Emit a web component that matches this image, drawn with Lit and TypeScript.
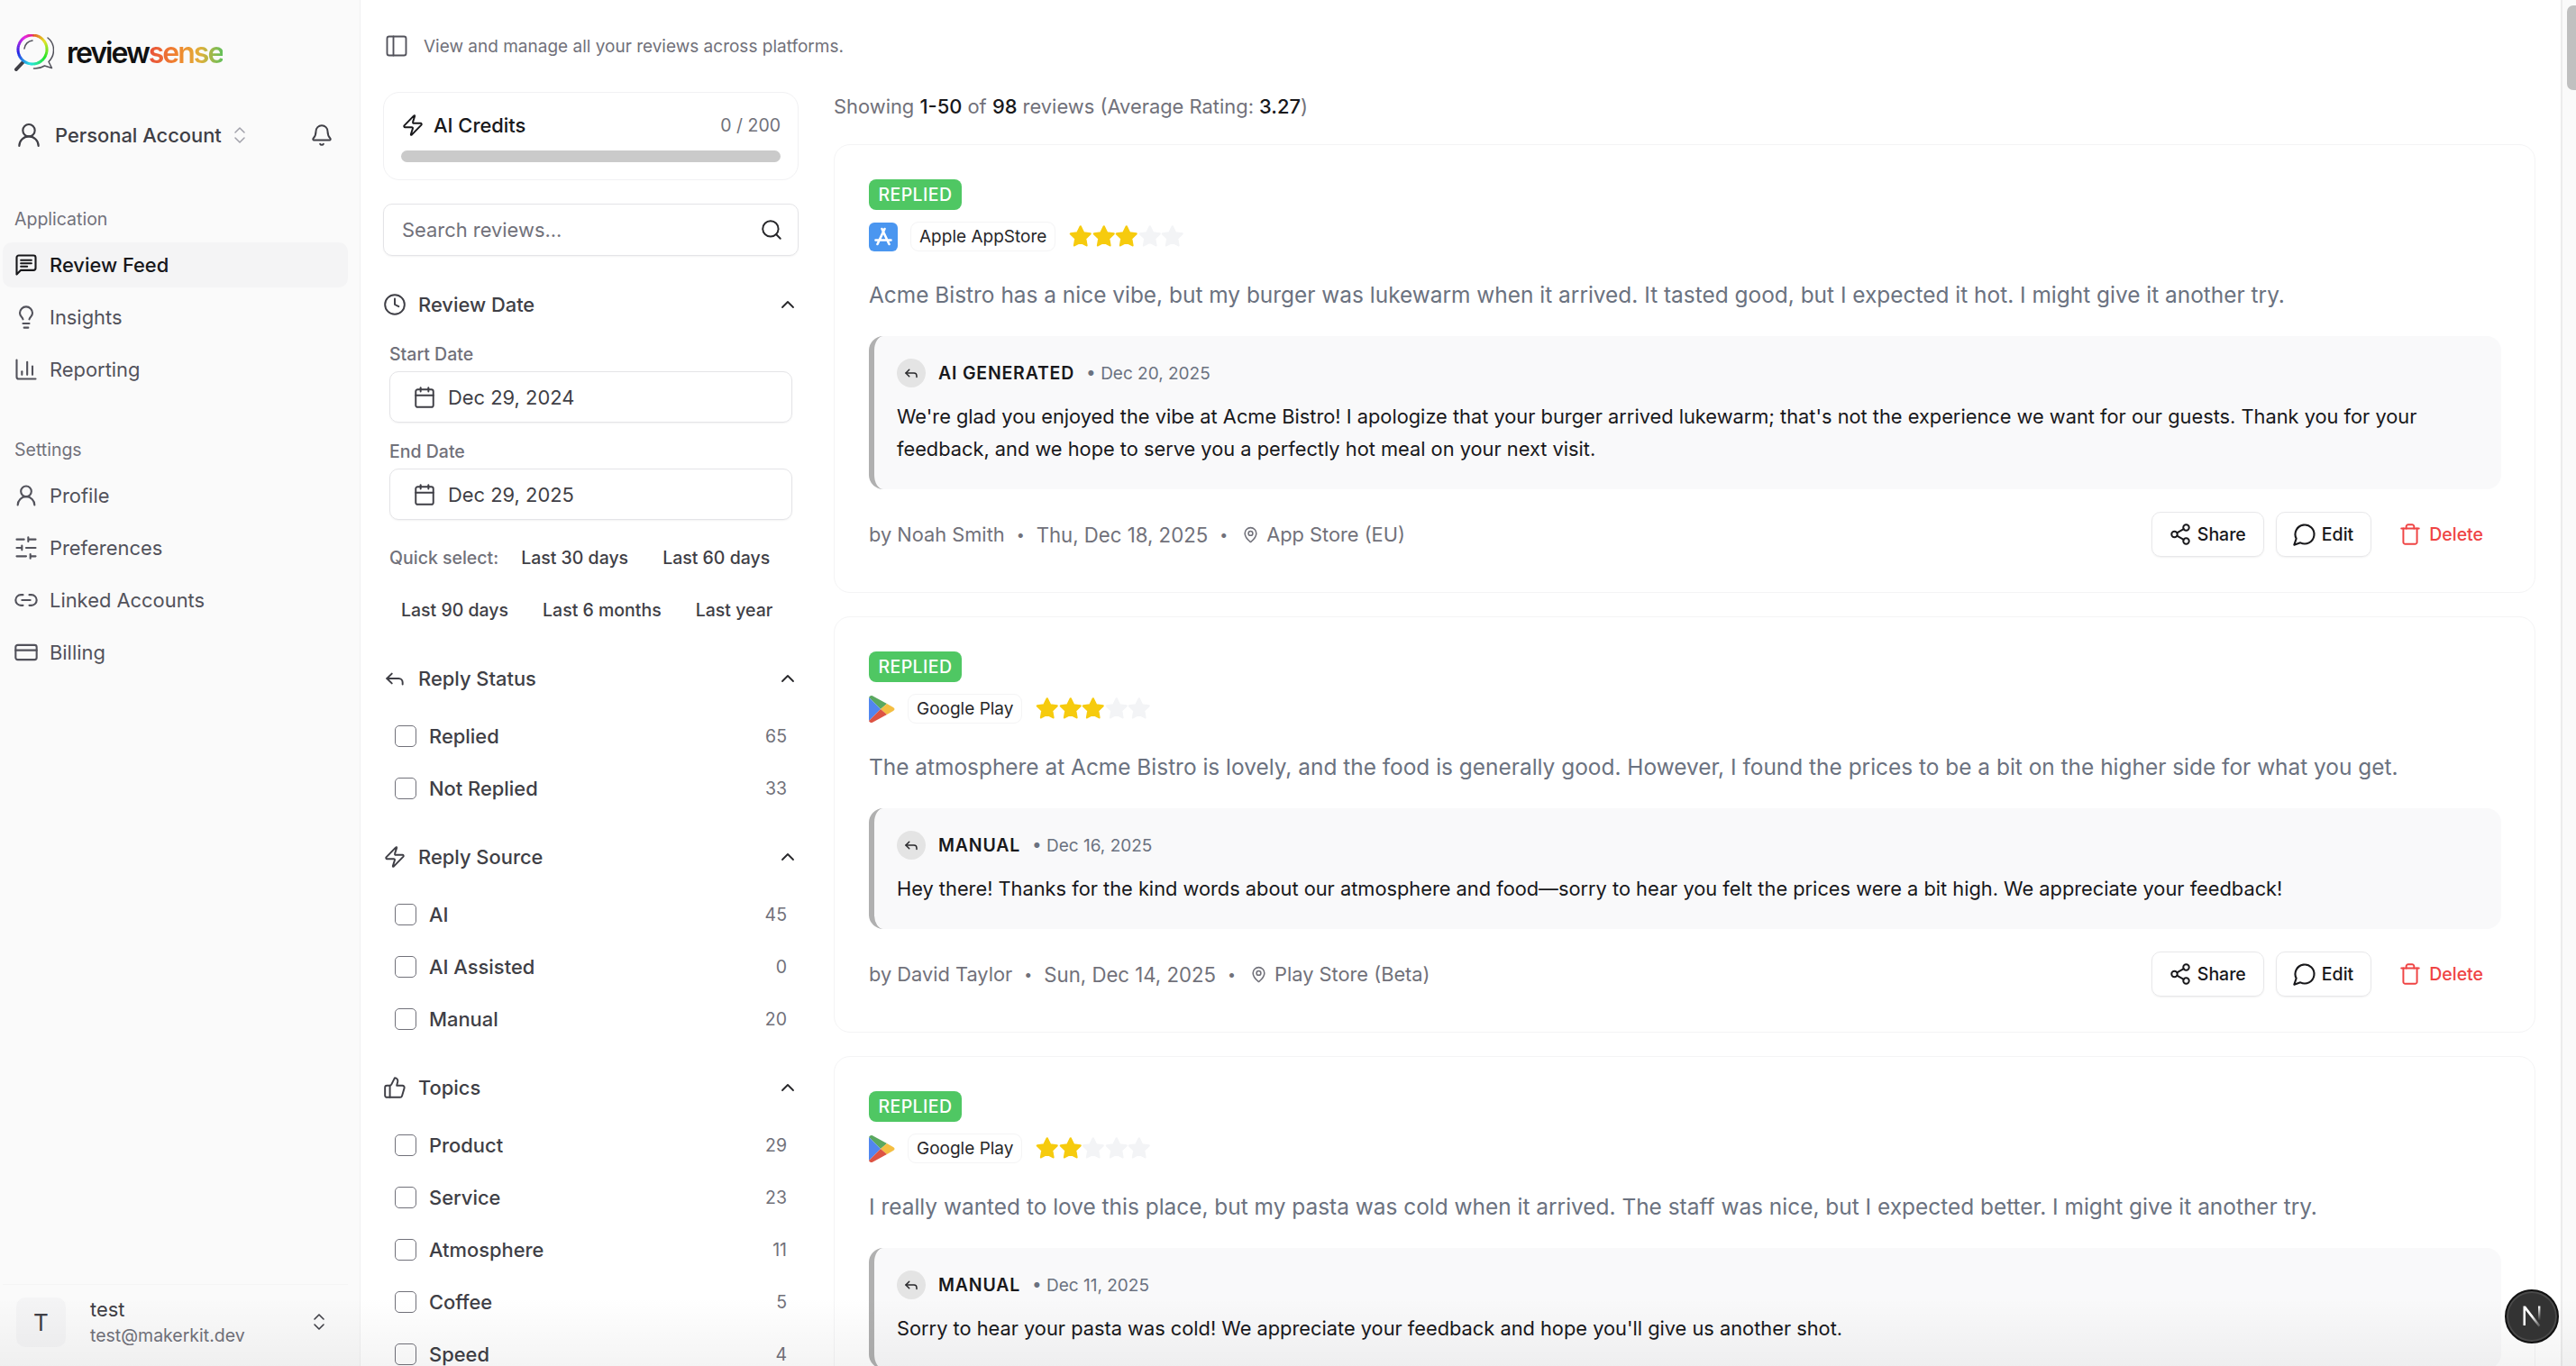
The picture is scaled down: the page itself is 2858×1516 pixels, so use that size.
import { LitElement, html, css, svg } from "lit";
import { customElement } from "lit/decorators.js";

// lucide-style stroke icons
const icons: Record<string, unknown> = {
  panel: svg`<rect x="3" y="3" width="18" height="18" rx="2"/><path d="M9 3v18"/>`,
  user: svg`<circle cx="12" cy="8" r="5"/><path d="M20 21a8 8 0 0 0-16 0"/>`,
  updown: svg`<path d="m7 15 5 5 5-5"/><path d="m7 9 5-5 5 5"/>`,
  bell: svg`<path d="M10.268 21a2 2 0 0 0 3.464 0"/><path d="M3.262 15.326A1 1 0 0 0 4 17h16a1 1 0 0 0 .74-1.673C19.41 13.956 18 12.499 18 8A6 6 0 0 0 6 8c0 4.499-1.411 5.956-2.738 7.326"/>`,
  feed: svg`<path d="M21 15a2 2 0 0 1-2 2H7l-4 4V5a2 2 0 0 1 2-2h14a2 2 0 0 1 2 2z"/><path d="M17 7.500H7"/><path d="M17 10.500H7"/><path d="M13 13.500H7"/>`,
  bulb: svg`<path d="M15 14c.2-1 .7-1.7 1.5-2.5 1-.9 1.5-2.2 1.5-3.5A6 6 0 0 0 6 8c0 1 .2 2.2 1.5 3.5.7.7 1.3 1.5 1.5 2.5"/><path d="M9 18h6"/><path d="M10 22h4"/>`,
  chart: svg`<path d="M3 3v16a2 2 0 0 0 2 2h16"/><path d="M18 17V9"/><path d="M13 17V5"/><path d="M8 17v-3"/>`,
  sliders: svg`<path d="M21 4h-7M10 4H3M21 12h-9M8 12H3M21 20h-5M12 20H3M14 2v4M8 10v4M16 18v4"/>`,
  link: svg`<path d="M9 17H7A5 5 0 0 1 7 7h2"/><path d="M15 7h2a5 5 0 1 1 0 10h-2"/><path d="M8 12h8"/>`,
  card: svg`<rect width="20" height="14" x="2" y="5" rx="2"/><path d="M2 10h20"/>`,
  zap: svg`<path d="M4 14a1 1 0 0 1-.78-1.63l9.9-10.2a.5.5 0 0 1 .86.46l-1.92 6.02A1 1 0 0 0 13 10h7a1 1 0 0 1 .78 1.63l-9.9 10.2a.5.5 0 0 1-.86-.46l1.92-6.02A1 1 0 0 0 11 14z"/>`,
  search: svg`<path d="m21 21-4.34-4.34"/><circle cx="11" cy="11" r="8"/>`,
  clock: svg`<circle cx="12" cy="12" r="10"/><path d="M12 6v6l4 2"/>`,
  up: svg`<path d="m18 15-6-6-6 6"/>`,
  calendar: svg`<path d="M8 2v4"/><path d="M16 2v4"/><rect width="18" height="18" x="3" y="4" rx="2"/><path d="M3 10h18"/>`,
  reply: svg`<path d="M9 17l-5-5 5-5"/><path d="M20 18v-2a4 4 0 0 0-4-4H4"/>`,
  thumb: svg`<path d="M7 10v12"/><path d="M15 5.880 14 10h5.830a2 2 0 0 1 1.920 2.560l-2.330 8A2 2 0 0 1 17.500 22H4a2 2 0 0 1-2-2v-8a2 2 0 0 1 2-2h2.760a2 2 0 0 0 1.790-1.110L12 2a3.130 3.130 0 0 1 3 3.880Z"/>`,
  pin: svg`<path d="M20 10c0 4.993-5.539 10.193-7.399 11.799a1 1 0 0 1-1.202 0C9.539 20.193 4 14.993 4 10a8 8 0 0 1 16 0"/><circle cx="12" cy="10" r="3"/>`,
  share: svg`<circle cx="18" cy="5" r="3"/><circle cx="6" cy="12" r="3"/><circle cx="18" cy="19" r="3"/><path d="m8.590 13.510 6.830 3.980"/><path d="m15.410 6.510-6.820 3.980"/>`,
  comment: svg`<path d="M7.900 20A9 9 0 1 0 4 16.100L2 22Z"/>`,
  trash: svg`<path d="M3 6h18"/><path d="M19 6v14c0 1-1 2-2 2H7c-1 0-2-1-2-2V6"/><path d="M8 6V4c0-1 1-2 2-2h4c1 0 2 1 2 2v2"/>`,
};

const icon = (name: string, size = 26, sw = 1.8) =>
  html`<svg class="ic" width=${size} height=${size} viewBox="0 0 24 24" fill="none" stroke="currentColor" stroke-width=${sw} stroke-linecap="round" stroke-linejoin="round">${icons[name]}</svg>`;

const appStoreIcon = html`<svg class="src" width="32" height="32" viewBox="0 0 32 32">
  <rect width="32" height="32" rx="6" fill="#4a96f0"/>
  <path d="M17.500 7 9.500 24M14.500 7 22.500 24M7.500 19.500h17" stroke="#fff" stroke-width="2.600" stroke-linecap="round" fill="none"/>
</svg>`;

const playIcon = html`<svg class="src" width="29" height="32" viewBox="0 0 29 32">
  <path d="M0 3C1 1 2.500 .5 4 1.200L20 10 13 16Z" fill="#5aa85f"/>
  <path d="M0 3V29L13 16Z" fill="#5186ef"/>
  <path d="M13 16 20 10 27 14C29 15 29 17 27 18L20 22Z" fill="#f4be42"/>
  <path d="M0 29C1 31 2.500 31.500 4 30.800L20 22 13 16Z" fill="#dd5343"/>
</svg>`;

const star = (on: boolean) =>
  html`<svg width="25.500" height="25" viewBox="1.500 2 21 20.500" fill=${on ? "#f6cb0e" : "#f3f4f6"} stroke=${on ? "#f6cb0e" : "#f3f4f6"} stroke-width="1.800" stroke-linejoin="round"><path d="M12 3l2.800 5.800 6.200.9-4.500 4.400 1.100 6.300L12 17.400l-5.600 3 1.100-6.300L3 9.700l6.200-.9z"/></svg>`;

// rainbow ring of the logo, built from short arc pieces
const ringPieces = Array.from({ length: 48 }, (_, i) => {
  const a0 = (i / 48) * Math.PI * 2;
  const a1 = ((i + 1.2) / 48) * Math.PI * 2;
  const p = (a: number) => `${20 + 16 * Math.sin(a)} ${17 - 16 * Math.cos(a)}`;
  const hue = (15 + (i / 48) * 320) % 360;
  return svg`<path d="M${p(a0)}A16 16 0 0 1 ${p(a1)}" stroke="hsl(${hue} 78% 52%)"/>`;
});

const logo = html`<svg class="src" width="44" height="41" viewBox="0 0 44 41" fill="none">
  <path d="M37 4C41.500 7.500 43.500 12 43.500 17.500 43.500 23 41 27.500 38 30.500L41.500 37.500 33.500 35C29.500 37.500 26 38.300 21.500 38" stroke="#52525b" stroke-width="1.500" stroke-linecap="round" stroke-linejoin="round"/>
  <path d="M2 39 10 30.500" stroke="#3f3f46" stroke-width="4" stroke-linecap="round"/>
  <g stroke-width="3" fill="none">${ringPieces}</g>
  <path d="M11 16a10 10 0 0 1 9-9" stroke="#52525b" stroke-width="1.500" stroke-linecap="round"/>
</svg>`;

interface Review {
  source: "apple" | "play";
  sourceName: string;
  rating: number;
  text: string;
  kind: string;
  replyDate: string;
  reply: string;
  author: string;
  date: string;
  place: string;
}

const reviews: Review[] = [
  {
    source: "apple",
    sourceName: "Apple AppStore",
    rating: 3,
    text: "Acme Bistro has a nice vibe, but my burger was lukewarm when it arrived. It tasted good, but I expected it hot. I might give it another try.",
    kind: "AI GENERATED",
    replyDate: "Dec 20, 2025",
    reply:
      "We're glad you enjoyed the vibe at Acme Bistro! I apologize that your burger arrived lukewarm; that's not the experience we want for our guests. Thank you for your feedback, and we hope to serve you a perfectly hot meal on your next visit.",
    author: "Noah Smith",
    date: "Thu, Dec 18, 2025",
    place: "App Store (EU)",
  },
  {
    source: "play",
    sourceName: "Google Play",
    rating: 3,
    text: "The atmosphere at Acme Bistro is lovely, and the food is generally good. However, I found the prices to be a bit on the higher side for what you get.",
    kind: "MANUAL",
    replyDate: "Dec 16, 2025",
    reply:
      "Hey there! Thanks for the kind words about our atmosphere and food—sorry to hear you felt the prices were a bit high. We appreciate your feedback!",
    author: "David Taylor",
    date: "Sun, Dec 14, 2025",
    place: "Play Store (Beta)",
  },
  {
    source: "play",
    sourceName: "Google Play",
    rating: 2,
    text: "I really wanted to love this place, but my pasta was cold when it arrived. The staff was nice, but I expected better. I might give it another try.",
    kind: "MANUAL",
    replyDate: "Dec 11, 2025",
    reply:
      "Sorry to hear your pasta was cold! We appreciate your feedback and hope you'll give us another shot.",
    author: "Emma Wilson",
    date: "Tue, Dec 9, 2025",
    place: "Play Store",
  },
];

const appNav = [
  { icon: "feed", label: "Review Feed", active: true },
  { icon: "bulb", label: "Insights" },
  { icon: "chart", label: "Reporting" },
];
const settingsNav = [
  { icon: "user", label: "Profile" },
  { icon: "sliders", label: "Preferences" },
  { icon: "link", label: "Linked Accounts" },
  { icon: "card", label: "Billing" },
];

const filterSections = [
  { icon: "reply", title: "Reply Status", items: [["Replied", 65], ["Not Replied", 33]] },
  { icon: "zap", title: "Reply Source", items: [["AI", 45], ["AI Assisted", 0], ["Manual", 20]] },
  { icon: "thumb", title: "Topics", items: [["Product", 29], ["Service", 23], ["Atmosphere", 11], ["Coffee", 5], ["Speed", 4]] },
];

@customElement("app-root")
export class AppRoot extends LitElement {
  static styles = css`
    :host {
      display: block;
      height: 1516px;
      font-family: Inter, "Liberation Sans", sans-serif;
      font-size: 21.9px;
      color: #18181b;
    }
    * { box-sizing: border-box; }
    .ic, .src { flex: none; display: block; }
    .app {
      position: relative;
      display: flex;
      height: 1516px;
      overflow: hidden;
      background: #fff;
    }

    /* sidebar */
    .sidebar {
      flex: none;
      width: 400px;
      display: flex;
      flex-direction: column;
      background: #fafafa;
      border-right: 1px solid #f0f0f1;
      padding: 38px 13px 0 3px;
    }
    .logo {
      display: flex;
      align-items: center;
      gap: 14px;
      height: 41px;
      padding-left: 13px;
      font-size: 32px;
      font-weight: 600;
      letter-spacing: -2px;
      color: #111;
    }
    .logo b {
      font-weight: 600;
      background: linear-gradient(90deg, #e8503a, #f0862e 40%, #e0b03a 70%, #62c05a);
      -webkit-background-clip: text;
      background-clip: text;
      color: transparent;
    }
    .account {
      display: flex;
      align-items: center;
      height: 50px;
      margin-top: 46px;
      padding-left: 13px;
      color: #3f3f46;
    }
    .account .name { margin-left: 13px; font-weight: 500; }
    .account .updown { margin-left: 8px; color: #a1a1aa; }
    .account .bell { margin-left: auto; margin-right: 16px; color: #3f3f46; }
    .group-label {
      height: 32px;
      line-height: 32px;
      padding-left: 13px;
      font-size: 19.5px;
      color: #71717a;
      margin-top: 48px;
      margin-bottom: 10px;
    }
    .group-label.first { margin-top: 52px; }
    .nav-list { display: flex; flex-direction: column; gap: 8px; }
    .nav {
      display: flex;
      align-items: center;
      gap: 12px;
      height: 50px;
      padding-left: 12px;
      border-radius: 10px;
      color: #52525b;
    }
    .nav.active { background: #f4f4f5; color: #18181b; font-weight: 500; }
    .user {
      margin-top: auto;
      display: flex;
      align-items: center;
      height: 91px;
      padding: 0 0 8px 15px;
      border-top: 1px solid #f4f4f5;
    }
    .avatar {
      width: 55px;
      height: 55px;
      border-radius: 10px;
      background: #f4f4f5;
      display: flex;
      align-items: center;
      justify-content: center;
      font-size: 26px;
      color: #3f3f46;
    }
    .user-info { margin-left: 27px; display: flex; flex-direction: column; gap: 3px; color: #3f3f46; }
    .user-info span { line-height: 26px; }
    .user-info small { font-size: 19.5px; line-height: 26px; color: #71717a; }
    .user .updown { margin-left: auto; margin-right: 20px; color: #3f3f46; }

    /* content */
    .content { flex: 1; min-width: 0; display: flex; flex-direction: column; padding-left: 25px; }
    .topbar {
      flex: none;
      height: 102px;
      display: flex;
      align-items: center;
      gap: 16px;
      padding-left: 1px;
      font-size: 19px;
      color: #71717a;
    }
    .topbar .ic { color: #52525b; }
    .body { display: flex; gap: 39px; }

    /* filters */
    .filters { flex: none; width: 461px; }
    .credits {
      height: 98px;
      border: 1px solid #f1f1f3;
      border-radius: 18px;
      padding: 20px 19px 0 19px;
    }
    .credits-row { display: flex; align-items: center; height: 32px; font-weight: 500; }
    .credits-row .ic { margin-right: 10px; }
    .credits-row small { margin-left: auto; font-size: 19.5px; font-weight: 400; color: #71717a; }
    .bar { height: 13px; margin-top: 12px; border-radius: 7px; background: #cacaca; }
    .search {
      display: flex;
      align-items: center;
      justify-content: space-between;
      height: 58px;
      margin-top: 26px;
      padding: 0 16px 0 20px;
      border: 1px solid #e4e4e7;
      border-radius: 10px;
      box-shadow: 0 1px 2px rgba(0, 0, 0, 0.05);
      color: #71717a;
    }
    .search .ic { color: #27272a; }
    .section { margin-top: 27px; }
    .section.date { margin-top: 34px; padding-bottom: 7px; }
    .section-head {
      display: flex;
      align-items: center;
      gap: 13px;
      height: 40px;
      font-weight: 500;
      color: #3f3f46;
    }
    .section-head .chev { margin-left: auto; color: #27272a; }
    .date-body { padding: 0 7px; margin-top: 23px; }
    .date-label {
      height: 24px;
      line-height: 24px;
      font-size: 19.5px;
      font-weight: 500;
      color: #71717a;
    }
    .date-input {
      display: flex;
      align-items: center;
      gap: 13px;
      height: 57px;
      margin: 7px 0 20px;
      padding-left: 25px;
      border: 1px solid #e4e4e7;
      border-radius: 10px;
      box-shadow: 0 1px 2px rgba(0, 0, 0, 0.05);
      color: #3f3f46;
    }
    .quick {
      display: flex;
      flex-wrap: wrap;
      gap: 14px 12px;
      font-size: 19.5px;
      font-weight: 500;
    }
    .quick span { height: 44px; line-height: 44px; }
    .quick .lbl { color: #71717a; }
    .quick .btn { padding: 0 13px; color: #3f3f46; }
    .options { margin-top: 15px; padding: 0 13px; }
    .option { display: flex; align-items: center; height: 58px; color: #3f3f46; font-weight: 500; }
    .check {
      flex: none;
      width: 24px;
      height: 24px;
      margin-right: 14px;
      border: 1.5px solid #71717a;
      border-radius: 5px;
      background: #fff;
    }
    .option small { margin-left: auto; font-size: 19.5px; font-weight: 400; color: #71717a; }

    /* feed */
    .feed { flex: none; width: 1888px; }
    .summary { height: 32px; line-height: 32px; margin-bottom: 26px; color: #71717a; }
    .summary b { font-weight: 500; color: #18181b; }
    .cards { display: flex; flex-direction: column; gap: 26px; }
    .review {
      border: 1px solid #f4f4f5;
      border-radius: 18px;
      padding: 38px 37px 39px 38px;
    }
    .badge {
      display: inline-flex;
      align-items: center;
      height: 34px;
      padding: 0 10.5px;
      border-radius: 8px;
      background: #4fc763;
      color: #fff;
      font-size: 19.5px;
      font-weight: 500;
      letter-spacing: 0.4px;
      vertical-align: top;
    }
    .source-row { display: flex; align-items: center; margin-top: 13px; height: 33px; }
    .pill {
      display: flex;
      align-items: center;
      height: 33px;
      margin: 0 15px 0 14px;
      padding: 0 9px;
      border: 1px solid #f4f4f5;
      border-radius: 9px;
      font-size: 19px;
      font-weight: 400;
      color: #27272a;
    }
    .stars { display: flex; }
    .text { margin-top: 27px; font-size: 24.43px; line-height: 42px; color: #6b7280; white-space: nowrap; }
    .reply {
      margin-top: 25px;
      padding: 25px 40px 27px 25px;
      background: #f9f9fa;
      border-left: 6px solid #b0b0b0;
      border-radius: 16px;
    }
    .reply-head { display: flex; align-items: center; height: 32px; font-size: 19px; color: #6b7280; }
    .reply-dot {
      width: 32px;
      height: 32px;
      border-radius: 50%;
      background: #e4e4e4;
      display: flex;
      align-items: center;
      justify-content: center;
      margin-right: 14px;
      color: #27272a;
    }
    .kind { font-weight: 600; font-size: 19.5px; letter-spacing: 0.8px; color: #18181b; margin-right: 13px; }
    .reply p { margin: 14px 0 0; font-size: 21.8px; line-height: 36px; color: #18181b; }
    .meta {
      display: flex;
      align-items: center;
      height: 50px;
      margin-top: 25px;
      font-size: 21.8px;
      color: #71717a;
    }
    .meta .dot { margin: 0 13px; font-size: 16px; }
    .meta .when { font-size: 22.2px; }
    .meta .ic { margin: 0 8px 0 3px; }
    .actions { margin-left: auto; display: flex; align-items: center; gap: 13px; font-size: 19.5px; font-weight: 500; }
    .action {
      display: flex;
      align-items: center;
      gap: 6px;
      height: 50px;
      padding: 0 19px 0 18px;
      border: 1px solid #e8e8ea;
      border-radius: 10px;
      box-shadow: 0 1px 2px rgba(0, 0, 0, 0.06);
      color: #18181b;
    }
    .action .ic { margin: 0; }
    .action.edit { padding: 0 19px 0 17px; gap: 5px; }
    .action.danger { border: none; box-shadow: none; color: #ef4444; gap: 8px; padding: 0 20px 0 17px; }

    /* browser scrollbar as seen in the capture */
    .scrollbar {
      flex: none;
      width: 17px;
      margin-left: 28px;
      background: #fafafa;
      border-left: 2px solid #ececec;
      padding: 6px 0 0 5px;
    }
    .thumb { height: 94px; border-radius: 7px 0 0 7px; background: #c0c0c0; }

    .fade {
      position: absolute;
      left: 0;
      right: 0;
      bottom: 0;
      height: 76px;
      background: linear-gradient(rgba(0, 0, 0, 0), rgba(0, 0, 0, 0.045));
      pointer-events: none;
    }
    .next {
      position: absolute;
      right: 19px;
      bottom: 25px;
      width: 60px;
      height: 60px;
      border-radius: 50%;
      background: #333;
      border: 2px solid #111;
      box-shadow: inset 0 0 0 2px #4a4a4a;
      display: flex;
      align-items: center;
      justify-content: center;
    }
  `;

  private navItem(n: { icon: string; label: string; active?: boolean }) {
    return html`<div class="nav ${n.active ? "active" : ""}">${icon(n.icon, 28)}<span>${n.label}</span></div>`;
  }

  private reviewCard(r: Review) {
    return html`<article class="review">
      <span class="badge">REPLIED</span>
      <div class="source-row">
        ${r.source === "apple" ? appStoreIcon : playIcon}
        <span class="pill">${r.sourceName}</span>
        <span class="stars">${[1, 2, 3, 4, 5].map((i) => star(i <= r.rating))}</span>
      </div>
      <div class="text">${r.text}</div>
      <div class="reply">
        <div class="reply-head">
          <span class="reply-dot">${icon("reply", 18, 2)}</span>
          <span class="kind">${r.kind}</span>
          <span>• ${r.replyDate}</span>
        </div>
        <p>${r.reply}</p>
      </div>
      <div class="meta">
        <span>by ${r.author}</span>
        <span class="dot">•</span>
        <span class="when">${r.date}</span>
        <span class="dot">•</span>
        ${icon("pin", 19, 2)}
        <span>${r.place}</span>
        <div class="actions">
          <span class="action">${icon("share", 26)}Share</span>
          <span class="action edit">${icon("comment", 28)}Edit</span>
          <span class="action danger">${icon("trash", 26)}Delete</span>
        </div>
      </div>
    </article>`;
  }

  render() {
    return html`<div class="app">
      <aside class="sidebar">
        <div class="logo">${logo}<span>review<b>sense</b></span></div>
        <div class="account">
          ${icon("user", 32, 1.6)}
          <span class="name">Personal Account</span>
          <span class="updown">${icon("updown", 24, 1.5)}</span>
          <span class="bell">${icon("bell", 26)}</span>
        </div>
        <div class="group-label first">Application</div>
        <div class="nav-list">${appNav.map((n) => this.navItem(n))}</div>
        <div class="group-label">Settings</div>
        <div class="nav-list">${settingsNav.map((n) => this.navItem(n))}</div>
        <div class="user">
          <div class="avatar">T</div>
          <div class="user-info"><span>test</span><small>test@makerkit.dev</small></div>
          <span class="updown">${icon("updown", 24, 1.6)}</span>
        </div>
      </aside>

      <div class="content">
        <div class="topbar">${icon("panel", 28, 1.6)}<span>View and manage all your reviews across platforms.</span></div>
        <div class="body">
          <section class="filters">
            <div class="credits">
              <div class="credits-row">${icon("zap", 26)}<span>AI Credits</span><small>0 / 200</small></div>
              <div class="bar"></div>
            </div>
            <div class="search"><span>Search reviews...</span>${icon("search", 26)}</div>

            <div class="section date">
              <div class="section-head">${icon("clock", 26)}<span>Review Date</span><span class="chev">${icon("up", 24)}</span></div>
              <div class="date-body">
                <div class="date-label">Start Date</div>
                <div class="date-input">${icon("calendar", 26)}<span>Dec 29, 2024</span></div>
                <div class="date-label">End Date</div>
                <div class="date-input">${icon("calendar", 26)}<span>Dec 29, 2025</span></div>
                <div class="quick">
                  <span class="lbl">Quick select:</span>
                  <span class="btn">Last 30 days</span>
                  <span class="btn">Last 60 days</span>
                  <span class="btn">Last 90 days</span>
                  <span class="btn">Last 6 months</span>
                  <span class="btn">Last year</span>
                </div>
              </div>
            </div>

            ${filterSections.map(
              (s) => html`<div class="section">
                <div class="section-head">${icon(s.icon, 26)}<span>${s.title}</span><span class="chev">${icon("up", 24)}</span></div>
                <div class="options">
                  ${s.items.map(
                    ([label, count]) => html`<div class="option"><span class="check"></span><span>${label}</span><small>${count}</small></div>`
                  )}
                </div>
              </div>`
            )}
          </section>

          <section class="feed">
            <div class="summary">Showing <b>1-50</b> of <b>98</b> reviews (Average Rating: <b>3.27</b>)</div>
            <div class="cards">${reviews.map((r) => this.reviewCard(r))}</div>
          </section>
        </div>
      </div>

      <div class="scrollbar"><div class="thumb"></div></div>
      <div class="fade"></div>
      <div class="next">
        <svg width="32" height="32" viewBox="0 0 32 32" fill="none">
          <defs>
            <linearGradient id="nx" x1="0" y1="0" x2="1" y2="1">
              <stop offset="0.5" stop-color="#fff"/><stop offset="1" stop-color="#fff" stop-opacity="0.1"/>
            </linearGradient>
            <linearGradient id="ny" x1="0" y1="0" x2="0" y2="1">
              <stop offset="0" stop-color="#fff"/><stop offset="1" stop-color="#fff" stop-opacity="0"/>
            </linearGradient>
          </defs>
          <path d="M6.500 4.500H9L25.500 26 23.500 27.500 9 9V26H6.500Z" fill="url(#nx)"/>
          <rect x="23" y="4.500" width="2.400" height="16" fill="url(#ny)"/>
        </svg>
      </div>
    </div>`;
  }
}
